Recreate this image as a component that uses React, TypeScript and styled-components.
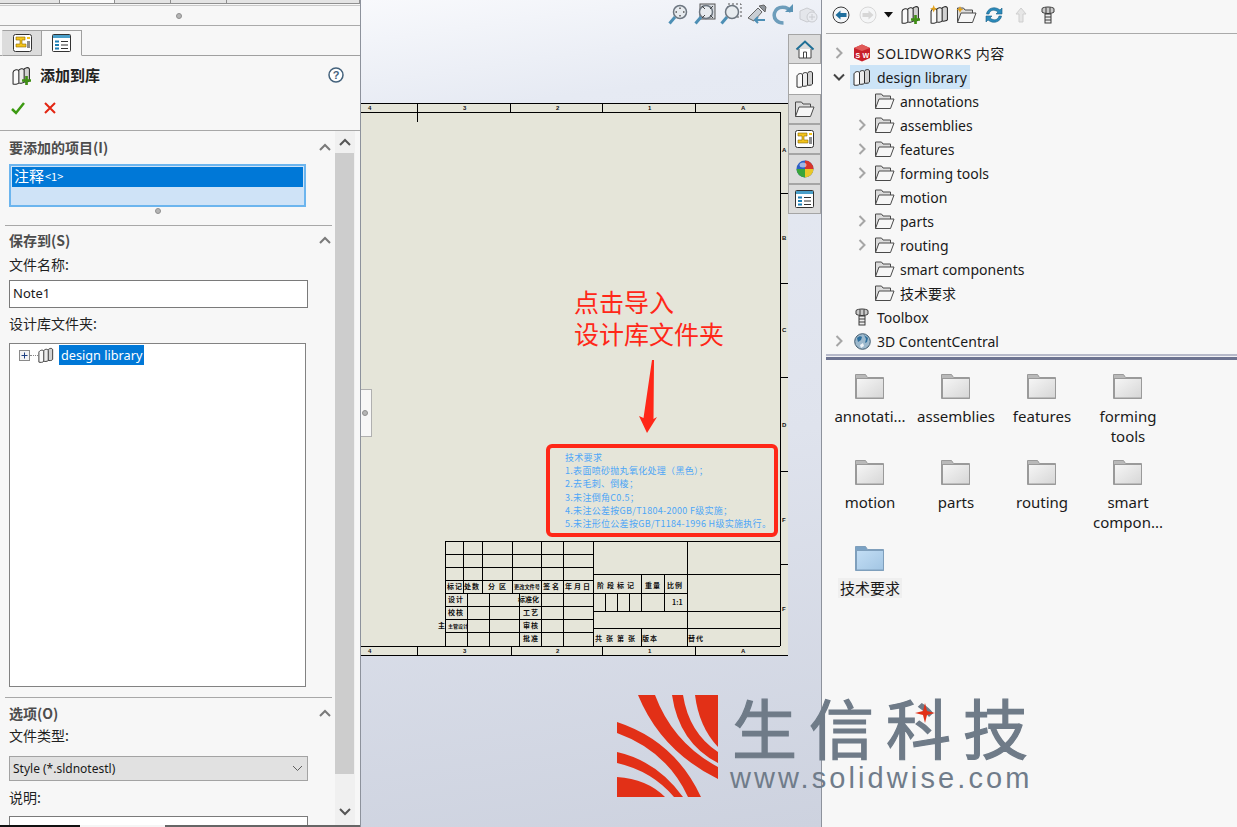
import styled, { createGlobalStyle } from 'styled-components';

const CJK = '"Noto Sans CJK SC", sans-serif';
const UI = '"Noto Sans", "Noto Sans CJK SC", sans-serif';

const GlobalStyle = createGlobalStyle`
  html, body {
    margin: 0;
    padding: 0;
    background: #f7f7f7;
  }
  * {
    box-sizing: border-box;
  }
`;

const Screen = styled.div`
  position: relative;
  display: flex;
  width: 1237px;
  height: 827px;
  overflow: hidden;
  font-family: ${UI};
  color: #1a1a1a;
`;

/* ---------- left property manager ---------- */

const LeftPanel = styled.aside`
  display: flex;
  flex-direction: column;
  width: 361px;
  height: 827px;
  flex: none;
  background: #f7f7f7;
  border-right: 1px solid #8d929c;
`;

const TopStubs = styled.div`
  display: flex;
  height: 6px;
  flex: none;
  border-bottom: 1px solid #c8c8c8;
`;

const Stub = styled.div<{ $w: number; $active?: boolean }>`
  width: ${(p) => p.$w}px;
  height: 4px;
  background: ${(p) => (p.$active ? '#fafafa' : '#e4e4e4')};
  border-right: 1px solid #8f8f8f;
  border-bottom: 1px solid #8f8f8f;
`;

const GripRow = styled.div<{ $h: number; $x: number; $line?: boolean }>`
  display: flex;
  align-items: center;
  height: ${(p) => p.$h}px;
  flex: none;
  padding-left: ${(p) => p.$x}px;
  ${(p) => p.$line && 'border-bottom: 1px solid #aaaaaa;'}
`;

const GripDot = styled.span`
  width: 6px;
  height: 6px;
  border-radius: 50%;
  background: #b5b5b5;
  border: 1px solid #8f8f8f;
`;

const TabBar = styled.div`
  display: flex;
  align-items: flex-end;
  height: 30px;
  flex: none;
  padding-left: 2px;
  border-bottom: 1px solid #a0a0a0;
`;

const PanelTab = styled.div<{ $active?: boolean }>`
  display: flex;
  align-items: center;
  justify-content: center;
  width: 40px;
  height: 26px;
  margin-bottom: -1px;
  background: ${(p) => (p.$active ? '#f7f7f7' : '#dcdcdc')};
  border: 1px solid #a0a0a0;
  border-left: ${(p) => (p.$active ? '0' : '1px solid #dcdcdc')};
  border-bottom: ${(p) => (p.$active ? '1px solid #f7f7f7' : '1px solid #a0a0a0')};
`;

const PropHeader = styled.div`
  display: flex;
  flex-direction: column;
  height: 75px;
  flex: none;
  padding: 0 16px 0 12px;
  border-bottom: 1px solid #a8a8a8;
`;

const TitleRow = styled.div`
  display: flex;
  align-items: center;
  height: 38px;
  gap: 9px;
`;

const Title = styled.div`
  flex: 1;
  padding-bottom: 2px;
  font-family: ${CJK};
  font-size: 15px;
  font-weight: 700;
  color: #222;
`;

const ActionRow = styled.div`
  display: flex;
  align-items: center;
  gap: 19px;
  height: 28px;
  margin-left: -1px;
`;

const PanelBody = styled.div`
  display: flex;
  height: 694px;
  flex: none;
`;

const PanelContent = styled.div`
  width: 335px;
  flex: none;
  padding-left: 5px;
  overflow: hidden;
`;

const Section = styled.section<{ $h: number; $line?: boolean }>`
  height: ${(p) => p.$h}px;
  width: 327px;
  padding-left: 4px;
  overflow: hidden;
  ${(p) => p.$line && 'border-bottom: 1px solid #a8a8a8;'}
`;

const SectionHead = styled.div<{ $h: number }>`
  display: flex;
  align-items: center;
  justify-content: space-between;
  height: ${(p) => p.$h}px;
  padding: 0 1px 1px 0;
  font-family: ${CJK};
  font-size: 14px;
  font-weight: 700;
  color: #4d4d4d;
`;

const FieldLabel = styled.div<{ $h: number; $lift: number }>`
  display: flex;
  align-items: center;
  height: ${(p) => p.$h}px;
  padding-bottom: ${(p) => p.$lift}px;
  line-height: 20px;
  font-family: ${CJK};
  font-size: 14px;
  color: #1f1f1f;
`;

const SelectionList = styled.div`
  width: 297px;
  height: 43px;
  padding: 1px;
  background: #cfe3f7;
  border: 2px solid #6cb5ee;
`;

const SelectedItem = styled.div`
  display: flex;
  align-items: center;
  height: 20px;
  padding: 0 0 3px 2px;
  background: #0078d7;
  color: #fff;
  font-family: ${CJK};
  font-size: 15px;
`;

const ItemCount = styled.span`
  font-size: 11px;
  margin-left: 1px;
`;

const TextInput = styled.div<{ $h?: number }>`
  display: flex;
  align-items: center;
  width: 299px;
  height: ${(p) => p.$h ?? 28}px;
  padding: 0 0 3px 3px;
  background: #fff;
  border: 1px solid #7a7a7a;
  font-size: 13px;
`;

const FolderTree = styled.div`
  width: 297px;
  height: 344px;
  padding: 1px 0 0 9px;
  background: #fff;
  border: 1px solid #828282;
`;

const FolderTreeRow = styled.div`
  display: flex;
  align-items: center;
  height: 20px;
`;

const Dots = styled.span`
  width: 8px;
  border-top: 1px dotted #888;
`;

const PickedNode = styled.span`
  display: flex;
  align-items: center;
  height: 20px;
  margin-left: 5px;
  padding: 0 2px;
  background: #0078d7;
  color: #fff;
  font-size: 12.7px;
`;

const ComboBox = styled.div`
  display: flex;
  align-items: center;
  justify-content: space-between;
  width: 299px;
  height: 25px;
  padding: 0 4px 0 3px;
  background: #e1e1e1;
  border: 1px solid #a3a3a3;
  font-size: 12px;
`;

const ScrollBar = styled.div`
  display: flex;
  flex-direction: column;
  width: 20px;
  flex: none;
  background: #f0f0f0;
`;

const ScrollArrow = styled.div<{ $h: number; $end?: boolean }>`
  display: flex;
  align-items: ${(p) => (p.$end ? 'flex-end' : 'center')};
  justify-content: center;
  height: ${(p) => p.$h}px;
  padding-bottom: ${(p) => (p.$end ? '9px' : '0')};
  flex: none;
`;

const ScrollThumb = styled.div`
  width: 19px;
  height: 621px;
  flex: none;
  background: #cdcdcd;
`;

const StatusStrip = styled.div`
  display: flex;
  height: 3px;
  flex: none;
  background: #666;
  margin-top: auto;
`;

const StatusPart = styled.div<{ $w: number; $c: string }>`
  width: ${(p) => p.$w}px;
  background: ${(p) => p.$c};
`;

/* ---------- centre canvas ---------- */

const Canvas = styled.main`
  position: relative;
  display: flex;
  width: 460px;
  flex: none;
  height: 827px;
  background: linear-gradient(172deg, #f8f9fc 0%, #e6eaf3 14%, #dfe3ed 55%, #cdd2df 100%);
`;

const Workspace = styled.div`
  width: 427px;
  flex: none;
  padding-top: 103px;
`;

const Sheet = styled.div`
  position: relative;
  width: 427px;
  height: 553px;
  background: #e5e5d9;
`;

const SheetArt = styled.svg`
  display: block;
`;

const NoteBox = styled.div`
  position: absolute;
  left: 185px;
  top: 341px;
  width: 232px;
  height: 93px;
  padding: 3px 0 0 15px;
  border: 4px solid #ff2718;
  border-radius: 6px;
  font-family: ${CJK};
  font-size: 9px;
  letter-spacing: 0.3px;
  color: #4da5f7;
`;

const NoteLine = styled.div`
  height: 13.2px;
  line-height: 13px;
  white-space: nowrap;
`;

const Callout = styled.div`
  position: absolute;
  left: 213px;
  top: 182px;
  font-family: ${CJK};
  font-size: 25px;
  line-height: 32px;
  color: #ff2718;
`;

const HeadsUp = styled.div`
  position: absolute;
  top: 3px;
  left: 307px;
  display: flex;
  align-items: center;
  gap: 4px;
`;

const HeadsUpIcon = styled.span`
  display: flex;
  width: 22px;
  height: 24px;
  align-items: center;
  justify-content: center;
`;

const CollapseHandle = styled.div`
  position: absolute;
  left: 0;
  top: 389px;
  display: flex;
  align-items: center;
  width: 11px;
  height: 48px;
  padding-left: 1px;
  background: #f7f7f7;
  border: 1px solid #b0b0b0;
  border-left: 0;
`;

const PaneTabs = styled.nav`
  display: flex;
  flex-direction: column;
  width: 33px;
  flex: none;
  padding-top: 34px;
`;

const PaneTab = styled.div<{ $active?: boolean }>`
  display: flex;
  align-items: center;
  justify-content: center;
  height: 30px;
  background: ${(p) => (p.$active ? '#fbfbfb' : '#dcdcdc')};
  border: 1px solid #a5a5a5;
  border-top-width: ${(p) => (p.$active ? '0' : '1px')};
  border-right: ${(p) => (p.$active ? '0' : '1px solid #a5a5a5')};
  border-bottom-width: ${(p) => (p.$active ? '0' : '1px')};
`;

/* ---------- right task pane ---------- */

const RightPanel = styled.aside`
  display: flex;
  flex-direction: column;
  flex: 1;
  height: 827px;
  background: #f7f7f7;
  border-left: 1px solid #8d929c;
`;

const PaneToolbar = styled.div`
  display: flex;
  align-items: center;
  height: 34px;
  margin-left: 4px;
  padding: 0 0 4px 2px;
  border-bottom: 1px solid #aaa;
`;

const ToolSlot = styled.span<{ $w: number }>`
  display: flex;
  justify-content: center;
  width: ${(p) => p.$w}px;
  flex: none;
`;

const Tree = styled.div`
  height: 320px;
  flex: none;
  padding-top: 7px;
`;

const TreeRow = styled.div<{ $level: number }>`
  display: flex;
  align-items: center;
  height: 24px;
  padding-left: ${(p) => 11 + p.$level * 23}px;
  font-size: 14px;
`;

const ChevronSlot = styled.span<{ $level: number }>`
  display: flex;
  align-items: center;
  justify-content: center;
  width: 12px;
  margin-right: ${(p) => (p.$level ? 3 : 5)}px;
`;

const TreeNode = styled.span<{ $selected?: boolean }>`
  display: flex;
  align-items: center;
  gap: 6px;
  height: 24px;
  padding: 0 3px;
  background: ${(p) => (p.$selected ? '#cce4f7' : 'transparent')};
`;

const TreeIcon = styled.span<{ $w: number }>`
  display: flex;
  justify-content: center;
  width: ${(p) => p.$w}px;
  margin-right: ${(p) => (p.$w === 21 ? -1 : 0)}px;
  flex: none;
`;

const TreeLabel = styled.span<{ $spread?: boolean }>`
  letter-spacing: ${(p) => (p.$spread ? '0.5px' : '0')};
`;

const Splitter = styled.div`
  height: 6px;
  flex: none;
  margin-left: 4px;
  background: #f2f2f5;
  border-top: 2px solid #b6b9c9;
  border-bottom: 3px solid #6d7390;
`;

const IconGrid = styled.div`
  display: grid;
  grid-template-columns: repeat(4, 86px);
  grid-auto-rows: 86px;
  padding: 14px 0 0 5px;
`;

const IconCell = styled.div`
  display: flex;
  flex-direction: column;
  align-items: center;
  font-size: 15px;
  line-height: 20px;
  text-align: center;
`;

const IconLabel = styled.div<{ $selected?: boolean }>`
  margin-top: 7px;
  padding: 0 2px;
  font-family: ${UI};
  background: ${(p) => (p.$selected ? '#efefef' : 'transparent')};
`;

/* ---------- watermark ---------- */

const Watermark = styled.div`
  position: absolute;
  left: 617px;
  top: 695px;
  display: flex;
  gap: 16px;
  pointer-events: none;
`;

const WatermarkText = styled.div`
  position: relative;
  color: #6f7b88;
`;

const BrandName = styled.div`
  height: 62px;
  line-height: 62px;
  margin-left: -3px;
  font-family: ${CJK};
  font-size: 65px;
  letter-spacing: 12px;
  -webkit-text-stroke: 1.2px #6f7b88;
  white-space: nowrap;
`;

const BrandUrl = styled.div`
  margin-left: -5px;
  margin-top: 5px;
  line-height: 32px;
  font-family: 'Liberation Sans', sans-serif;
  font-size: 29px;
  letter-spacing: 3.1px;
  white-space: nowrap;
  color: #707c8a;
`;

const BrandStar = styled.svg`
  position: absolute;
  left: 180px;
  top: 8px;
`;

/* ---------- icons ---------- */

const Books = ({ size = 18, plus = false, star = false }: { size?: number; plus?: boolean; star?: boolean }) => (
  <svg width={size} height={size} viewBox="0 0 18 18">
    <g stroke="#2c2c2c" strokeWidth="1">
      <path d="M11 4C11.500 1.500 16 .5 16.500 3V14C16 15.500 12 15.500 11 15z" fill="#d2d2d2" />
      <path d="M6 5C6.500 2.500 11 1.500 11.500 4V15C11 16.500 7 16.500 6 16z" fill="#ececec" />
      <path d="M1 6C1.500 3.500 6 2.500 6.500 5V16C6 17.500 2 17.500 1 17z" fill="#fafafa" />
    </g>
    {plus && <path d="M12.500 9.500h2.500v3h3v2.500h-3v3h-2.500v-3h-3v-2.500h3z" fill="#3f8f14" />}
    {star && <path d="M3.500 0 4.500 2.500 7 3.500 4.500 4.500 3.500 7 2.500 4.500 0 3.500 2.500 2.500z" fill="#e2a21c" />}
  </svg>
);

const OpenFolder = ({ star = false }: { star?: boolean }) => (
  <svg width="21" height="18" viewBox="0 0 21 18">
    <path d="M1.500 16.500V2h6l1.500 2h7.500v3" fill="#dcdcdc" stroke="#4a4a4a" />
    <path d="M1.500 16.500 5 7h15l-3.500 9.500z" fill="#f6f6f6" stroke="#4a4a4a" />
    {star && <path d="M4 0 5 2.500 7.500 3.500 5 4.500 4 7 3 4.500.5 3.500 3 2.500z" fill="#e2a21c" />}
  </svg>
);

const Chevron = ({ open = false, tone = '#a6a6a6' }: { open?: boolean; tone?: string }) => (
  <svg width="12" height="12" viewBox="0 0 12 12">
    <path d={open ? 'M1 3.500 6 8.500 11 3.500' : 'M3.500 1 8.500 6 3.500 11'} fill="none" stroke={tone} strokeWidth="2" />
  </svg>
);

const CollapseUp = ({ tone = '#7a7a7a' }: { tone?: string }) => (
  <svg width="12" height="8" viewBox="0 0 12 8">
    <path d="M1 7 6 2l5 5" fill="none" stroke={tone} strokeWidth="2" />
  </svg>
);

const LayoutIcon = () => (
  <svg width="19" height="18" viewBox="0 0 19 18">
    <rect x=".5" y=".5" width="18" height="17" rx="2" fill="#fff" stroke="#333" />
    <path d="M3 3h9v3H9v4h4v3H3v-3h4V6H3z" fill="#f3c31c" stroke="#8a6a08" strokeWidth=".6" />
    <rect x="14" y="3" width="3" height="2" fill="#f3c31c" />
    <rect x="14" y="7" width="3" height="7" fill="#8d8d8d" />
  </svg>
);

const ListIcon = () => (
  <svg width="19" height="18" viewBox="0 0 19 18">
    <rect x=".5" y=".5" width="18" height="17" rx="1" fill="#fff" stroke="#333" />
    <rect x="1" y="1" width="17" height="3" fill="#4a9fc9" />
    <path d="M3 6.500h4v2H3zM3 10h4v2H3zM3 13.500h4v2H3z" fill="#1c7fb5" />
    <path d="M9 7.500h7M9 11h7M9 14.500h7" stroke="#333" />
  </svg>
);

const HomeIcon = () => (
  <svg width="20" height="19" viewBox="0 0 20 19">
    <path d="M1.500 9.500 10 1.500l8.500 8" fill="none" stroke="#1f6f96" strokeWidth="2" />
    <path d="M4 9v9h12V9" fill="#fff" stroke="#444" />
    <path d="M8.500 18v-6h3v6" fill="none" stroke="#444" />
  </svg>
);

const ColorBall = () => (
  <svg width="18" height="18" viewBox="0 0 18 18">
    <circle cx="9" cy="9" r="8.500" fill="#2d5fc4" />
    <path d="M9 9V.5A8.500 8.500 0 0 1 17.500 9z" fill="#d8352a" />
    <path d="M9 9h8.500A8.500 8.500 0 0 1 9 17.500z" fill="#e9c728" />
    <path d="M9 9v8.500A8.500 8.500 0 0 1 .5 9z" fill="#3aa53a" />
    <ellipse cx="7" cy="5" rx="3.500" ry="2.500" fill="#fff" opacity=".55" />
  </svg>
);

const SwCube = () => (
  <svg width="18" height="18" viewBox="0 0 18 18">
    <path d="M9 .5 17 4v10l-8 3.500L1 14V4z" fill="#c8202a" />
    <path d="M9 .5 17 4 9 7 1 4z" fill="#e05a58" />
    <text x="2.500" y="14" fontFamily="Liberation Sans" fontWeight="700" fontSize="7" fill="#fff">S</text>
    <text x="9.500" y="14" fontFamily="Liberation Sans" fontWeight="700" fontSize="7" fill="#fff">W</text>
  </svg>
);

const Bolt = () => (
  <svg width="14" height="18" viewBox="0 0 14 18">
    <path d="M1 2.500C3 .5 11 .5 13 2.500V6c-2 2-10 2-12 0z" fill="#c9c9c9" stroke="#3a3a3a" />
    <path d="M5 1.500v6M9 1.500v6" stroke="#3a3a3a" />
    <rect x="4" y="8" width="6" height="9" fill="#ededed" stroke="#3a3a3a" />
    <path d="M4 11h6M4 14h6" stroke="#3a3a3a" />
  </svg>
);

const Globe = () => (
  <svg width="17" height="17" viewBox="0 0 17 17">
    <circle cx="8.500" cy="8.500" r="7.800" fill="#9db9cd" stroke="#3f5a6e" />
    <path d="M3 5c2-2 4-2 5-1l-1 3-3 2zM10 2l4 3-1 4-2 1 1-4z" fill="#2c6f9e" />
    <path d="M6 12l3-2 1 3-3 2z" fill="#eef4f8" />
  </svg>
);

const Magnifier = ({ variant }: { variant: 'fit' | 'box' | 'dash' }) => (
  <svg width="22" height="24" viewBox="0 0 22 24">
    {variant === 'box' && <rect x="6" y="1" width="15" height="15" fill="#d8dce2" stroke="#555" />}
    {variant === 'dash' && <rect x="8" y="1" width="13" height="13" fill="none" stroke="#555" strokeDasharray="2 2" />}
    <circle cx="12" cy="9" r="6.500" fill="#e7ebef" stroke="#6d7680" strokeWidth="1.500" />
    <path d="M7 14 1.500 20.500" stroke="#4d8fb5" strokeWidth="3" />
    {variant === 'fit' && <path d="M12 4.500V6M12 12v1.500M7.500 9H9M15 9h1.500" stroke="#555" strokeWidth="1.500" />}
    {variant === 'box' && <path d="M8 3l3 3M19 3l-3 3M8 15l3-3M19 15l-3-3" stroke="#444" />}
  </svg>
);

const Flashlight = () => (
  <svg width="22" height="24" viewBox="0 0 22 24">
    <path d="M2 15 12 5l4 4-8 9z" fill="#c9ced4" stroke="#666" />
    <path d="M13 3l6 6 1-5-2-2z" fill="#8f959c" stroke="#666" />
    <path d="M9 17h10M12 14l-3 3 3 3" fill="none" stroke="#4d8fb5" strokeWidth="2" />
  </svg>
);

const RedoArrow = () => (
  <svg width="22" height="24" viewBox="0 0 22 24">
    <path d="M19 9C16 3 5 2 2.500 10c-1.500 6 3 10 9 10" fill="none" stroke="#6d9dbb" strokeWidth="3.500" />
    <path d="M13 9h8V1z" fill="#5a93b5" />
  </svg>
);

const FadedScene = () => (
  <svg width="22" height="24" viewBox="0 0 22 24" opacity=".35">
    <path d="M2 8l7-3 7 3v8l-7 3-7-3z" fill="#d6d6d6" stroke="#8a8a8a" />
    <circle cx="14" cy="14" r="5" fill="#e6e6e6" stroke="#8a8a8a" />
    <path d="M11 14h6M14 11v6" stroke="#8a8a8a" />
  </svg>
);

const FolderIcon = ({ blue = false }: { blue?: boolean }) => {
  const tab = blue ? '#7ba2c4' : '#b9b9b9';
  const line = blue ? '#7f9fbc' : '#9a9a9a';
  return (
    <svg width="30" height="25" viewBox="0 0 30 25">
      <defs>
        <linearGradient id={blue ? 'fb' : 'fg'} x1="0" y1="0" x2="1" y2="1">
          <stop offset="0" stopColor={blue ? '#c3def5' : '#f6f6f6'} />
          <stop offset="1" stopColor={blue ? '#a2c5e3' : '#d6d6d6'} />
        </linearGradient>
      </defs>
      <path d="M.5 24.500V.5h10l2 3h16v21z" fill={tab} stroke={line} />
      <rect x="1.500" y="4.500" width="27" height="19.500" fill={`url(#${blue ? 'fb' : 'fg'})`} stroke={line} />
    </svg>
  );
};

/* ---------- data ---------- */

const TREE: { label: string; level: number; arrow?: boolean; open?: boolean; kind: string }[] = [
  { label: 'SOLIDWORKS 内容', level: 0, arrow: true, kind: 'sw' },
  { label: 'design library', level: 0, arrow: true, open: true, kind: 'books' },
  { label: 'annotations', level: 1, kind: 'folder' },
  { label: 'assemblies', level: 1, arrow: true, kind: 'folder' },
  { label: 'features', level: 1, arrow: true, kind: 'folder' },
  { label: 'forming tools', level: 1, arrow: true, kind: 'folder' },
  { label: 'motion', level: 1, kind: 'folder' },
  { label: 'parts', level: 1, arrow: true, kind: 'folder' },
  { label: 'routing', level: 1, arrow: true, kind: 'folder' },
  { label: 'smart components', level: 1, kind: 'folder' },
  { label: '技术要求', level: 1, kind: 'folder' },
  { label: 'Toolbox', level: 0, kind: 'bolt' },
  { label: '3D ContentCentral', level: 0, arrow: true, kind: 'globe' },
];

const FOLDERS = ['annotati...', 'assemblies', 'features', 'forming tools', 'motion', 'parts', 'routing', 'smart compon...', '技术要求'];

const NOTES = [
  '技术要求',
  '1.表面喷砂抛丸氧化处理（黑色）；',
  '2.去毛刺、倒棱；',
  '3.未注倒角C0.5；',
  '4.未注公差按GB/T1804-2000 F级实施；',
  '5.未注形位公差按GB/T1184-1996 H级实施执行。',
];

// x1 y1 x2 y2 in page pixels, the svg viewBox uses the same numbers
const LINES = [
  [361, 103.5, 789, 103.5], [361, 112.5, 780, 112.5], [361, 646.5, 780, 646.5], [361, 655.5, 789, 655.5],
  [780.5, 112, 780.5, 646], [788.5, 103, 788.5, 655],
  [417.5, 103, 417.5, 122], [510.5, 103, 510.5, 112], [602.5, 103, 602.5, 112], [695.5, 103, 695.5, 112],
  [417.5, 646, 417.5, 655], [511.5, 646, 511.5, 655], [602.5, 646, 602.5, 655], [695.5, 646, 695.5, 655],
  [780, 193.5, 789, 193.5], [780, 283.5, 789, 283.5], [780, 377.5, 789, 377.5], [780, 471.5, 789, 471.5], [780, 564.5, 789, 564.5],
  // title block, left part
  [445, 541.5, 780, 541.5], [445, 554.5, 593, 554.5], [445, 567.5, 593, 567.5], [445, 580.5, 593, 580.5],
  [445, 593.5, 687, 593.5], [445, 606.5, 593, 606.5], [445, 619.5, 593, 619.5], [445, 632.5, 593, 632.5],
  [445.5, 541, 445.5, 646], [463.5, 541, 463.5, 593], [482.5, 541, 482.5, 593], [512.5, 541, 512.5, 593],
  [541.5, 541, 541.5, 646], [563.5, 541, 563.5, 646], [593.5, 541, 593.5, 646],
  [467.5, 593, 467.5, 646], [489.5, 593, 489.5, 646], [519.5, 593, 519.5, 646],
  // title block, right part
  [593, 574.5, 780, 574.5], [593, 611.5, 780, 611.5], [593, 628.5, 780, 628.5], [687.5, 541, 687.5, 646],
  [641.5, 574, 641.5, 611], [664.5, 574, 664.5, 611], [605.5, 593, 605.5, 611], [617.5, 593, 617.5, 611],
  [629.5, 593, 629.5, 611], [641.5, 628, 641.5, 646],
];

// x, baseline, text, letter spacing, font size
const LABELS: [number, number, string, number, number][] = [
  [447, 589, '标记', 1, 7], [464, 589, '处数', 1, 7], [488, 589, '分区', 4, 7], [514, 589, '更改文件号', 0, 5.2], [543, 589, '签名', 2, 7],
  [565, 589, '年月日', 2, 7],
  [448, 602, '设计', 1, 7], [518, 602, '标准化', 0, 7], [448, 615, '校核', 1, 7], [523, 615, '工艺', 1, 7],
  [448, 628, '主管设计', 0, 5], [523, 628, '审核', 1, 7], [523, 641, '批准', 1, 7], [438, 628, '主', 0, 7],
  [597, 588, '阶段标记', 3, 7], [645, 588, '重量', 1, 7], [667, 588, '比例', 1, 7], [672, 605, '1:1', 0, 7],
  [595, 641, '共张第张', 4, 7], [642, 641, '版本', 1, 7], [688, 641, '替代', 1, 7],
];

const BORDER_MARKS: [number, number, string][] = [
  [368, 110, '4'], [463, 110, '3'], [556, 110, '2'], [648, 110, '1'], [741, 110, 'A'],
  [782, 152, 'A'], [782, 240, 'B'], [782, 332, 'C'], [782, 427, 'D'], [782, 522, 'F'], [782, 611, 'F'],
  [463, 653, '3'], [556, 653, '2'], [648, 653, '1'], [741, 653, 'A'], [368, 653, '4'],
];

export default function App() {
  return (
    <Screen>
      <GlobalStyle />

      <LeftPanel>
        <TopStubs>
          <Stub $w={60} />
          <Stub $w={55} $active />
          <Stub $w={56} />
          <Stub $w={56} />
          <Stub $w={133} />
        </TopStubs>
        <GripRow $h={20} $x={176} $line>
          <GripDot />
        </GripRow>
        <TabBar>
          <PanelTab>
            <LayoutIcon />
          </PanelTab>
          <PanelTab $active>
            <ListIcon />
          </PanelTab>
        </TabBar>
        <PropHeader>
          <TitleRow>
            <Books plus size={19} />
            <Title>添加到库</Title>
            <svg width="16" height="16" viewBox="0 0 16 16">
              <circle cx="8" cy="8" r="7" fill="#fff" stroke="#44627c" strokeWidth="1.500" />
              <text x="8" y="12" textAnchor="middle" fontSize="11" fontWeight="700" fontFamily="Liberation Sans" fill="#44627c">?</text>
            </svg>
          </TitleRow>
          <ActionRow>
            <svg width="14" height="14" viewBox="0 0 14 14">
              <path d="M1 8l4 4 8-10" fill="none" stroke="#3c9a12" strokeWidth="2.500" />
            </svg>
            <svg width="12" height="12" viewBox="0 0 12 12">
              <path d="M1 1l10 10M11 1 1 11" stroke="#e32512" strokeWidth="2" />
            </svg>
          </ActionRow>
        </PropHeader>
        <PanelBody>
          <PanelContent>
            <Section $h={95} $line>
              <SectionHead $h={33}>
                要添加的项目(I)
                <CollapseUp />
              </SectionHead>
              <SelectionList>
                <SelectedItem>
                  注释<ItemCount>&lt;1&gt;</ItemCount>
                </SelectedItem>
              </SelectionList>
              <GripRow $h={8} $x={146}>
                <GripDot />
              </GripRow>
            </Section>
            <Section $h={472} $line>
              <SectionHead $h={29}>
                保存到(S)
                <CollapseUp />
              </SectionHead>
              <FieldLabel $h={25} $lift={8}>文件名称:</FieldLabel>
              <TextInput>Note1</TextInput>
              <FieldLabel $h={35} $lift={6}>设计库文件夹:</FieldLabel>
              <FolderTree>
                <FolderTreeRow>
                  <svg width="11" height="11" viewBox="0 0 11 11">
                    <rect x=".5" y=".5" width="10" height="10" fill="#f3f3f3" stroke="#8a8a8a" />
                    <path d="M2.500 5.500h6M5.500 2.500v6" stroke="#1d3f82" />
                  </svg>
                  <Dots />
                  <Books size={16} />
                  <PickedNode>design library</PickedNode>
                </FolderTreeRow>
              </FolderTree>
            </Section>
            <Section $h={128}>
              <SectionHead $h={30}>
                选项(O)
                <CollapseUp />
              </SectionHead>
              <FieldLabel $h={28} $lift={14}>文件类型:</FieldLabel>
              <ComboBox>
                Style (*.sldnotestl)
                <svg width="11" height="7" viewBox="0 0 11 7">
                  <path d="M1 1l4.500 4.500L10 1" fill="none" stroke="#5f5f5f" />
                </svg>
              </ComboBox>
              <FieldLabel $h={35} $lift={4}>说明:</FieldLabel>
              <TextInput $h={20} />
            </Section>
          </PanelContent>
          <ScrollBar>
            <ScrollArrow $h={22}>
              <CollapseUp tone="#555" />
            </ScrollArrow>
            <ScrollThumb />
            <ScrollArrow $h={51} $end>
              <svg width="12" height="8" viewBox="0 0 12 8">
                <path d="M1 1l5 5 5-5" fill="none" stroke="#555" strokeWidth="2" />
              </svg>
            </ScrollArrow>
          </ScrollBar>
        </PanelBody>
        <StatusStrip>
          <StatusPart $w={80} $c="#111" />
          <StatusPart $w={85} $c="#f5f5f5" />
        </StatusStrip>
      </LeftPanel>

      <Canvas>
        <Workspace>
          <Sheet>
            <SheetArt width="427" height="553" viewBox="361 103 427 553">
              {LINES.map(([x1, y1, x2, y2], i) => (
                <line key={i} x1={x1} y1={y1} x2={x2} y2={y2} stroke="#000" strokeWidth="1" shapeRendering="crispEdges" />
              ))}
              {LABELS.map(([x, y, text, spacing, size]) => (
                <text key={`${x}-${y}`} x={x} y={y} fontFamily={CJK} fontWeight="700" fontSize={size} letterSpacing={spacing} fill="#111">
                  {text}
                </text>
              ))}
              {BORDER_MARKS.map(([x, y, text]) => (
                <text key={`${x}-${y}`} x={x} y={y} fontFamily="Liberation Sans" fontWeight="700" fontSize="6" fill="#111">
                  {text}
                </text>
              ))}
              <path d="M652 360H654L653.500 419 657 417 647 433 639 416 643.500 418z" fill="#ff2718" />
            </SheetArt>
            <Callout>
              点击导入
              <br />
              设计库文件夹
            </Callout>
            <NoteBox>
              {NOTES.map((line) => (
                <NoteLine key={line}>{line}</NoteLine>
              ))}
            </NoteBox>
          </Sheet>
        </Workspace>
        <PaneTabs>
          <PaneTab>
            <HomeIcon />
          </PaneTab>
          <PaneTab $active>
            <Books size={18} />
          </PaneTab>
          <PaneTab>
            <OpenFolder />
          </PaneTab>
          <PaneTab>
            <LayoutIcon />
          </PaneTab>
          <PaneTab>
            <ColorBall />
          </PaneTab>
          <PaneTab>
            <ListIcon />
          </PaneTab>
        </PaneTabs>
        <HeadsUp>
          <HeadsUpIcon>
            <Magnifier variant="fit" />
          </HeadsUpIcon>
          <HeadsUpIcon>
            <Magnifier variant="box" />
          </HeadsUpIcon>
          <HeadsUpIcon>
            <Magnifier variant="dash" />
          </HeadsUpIcon>
          <HeadsUpIcon>
            <Flashlight />
          </HeadsUpIcon>
          <HeadsUpIcon>
            <RedoArrow />
          </HeadsUpIcon>
          <HeadsUpIcon>
            <FadedScene />
          </HeadsUpIcon>
        </HeadsUp>
        <CollapseHandle>
          <GripDot />
        </CollapseHandle>
      </Canvas>

      <RightPanel>
        <PaneToolbar>
          <ToolSlot $w={26}>
            <svg width="18" height="18" viewBox="0 0 18 18">
              <circle cx="9" cy="9" r="8" fill="#f4f6f8" stroke="#3a3a3a" />
              <path d="M3.500 9 8.500 4.500V7h6v4h-6v2.500z" fill="#1f6f9e" />
            </svg>
          </ToolSlot>
          <ToolSlot $w={28}>
            <svg width="18" height="18" viewBox="0 0 18 18" opacity=".4">
              <circle cx="9" cy="9" r="8" fill="#f4f6f8" stroke="#a8a8a8" />
              <path d="M14.500 9 9.500 4.500V7h-6v4h6v2.500z" fill="#a8a8a8" />
            </svg>
          </ToolSlot>
          <ToolSlot $w={12}>
            <svg width="9" height="6" viewBox="0 0 9 6">
              <path d="M0 0h9L4.500 5.500z" fill="#111" />
            </svg>
          </ToolSlot>
          <ToolSlot $w={32}>
            <Books size={19} plus />
          </ToolSlot>
          <ToolSlot $w={27}>
            <Books size={19} star />
          </ToolSlot>
          <ToolSlot $w={27}>
            <OpenFolder star />
          </ToolSlot>
          <ToolSlot $w={27}>
            <svg width="18" height="18" viewBox="0 0 18 18">
              <path d="M1.500 8C2 3 9-1 15 4l2-2v6h-6l2-2C9 3 5 4 4 8z" fill="#2c8bbb" stroke="#1a5f86" strokeWidth=".6" />
              <path d="M16.500 10C16 15 9 19 3 14l-2 2v-6h6l-2 2c4 3 8 2 9-2z" fill="#2c8bbb" stroke="#1a5f86" strokeWidth=".6" />
            </svg>
          </ToolSlot>
          <ToolSlot $w={27}>
            <svg width="12" height="16" viewBox="0 0 12 16">
              <path d="M6 1 11 7H8v8H4V7H1z" fill="#e6e6e6" stroke="#cfcfcf" />
            </svg>
          </ToolSlot>
          <ToolSlot $w={27}>
            <Bolt />
          </ToolSlot>
        </PaneToolbar>
        <Tree>
          {TREE.map((row) => (
            <TreeRow key={row.label} $level={row.level}>
              <ChevronSlot $level={row.level}>
                {row.arrow && <Chevron open={row.open} tone={row.open ? '#444' : '#a6a6a6'} />}
              </ChevronSlot>
              <TreeNode $selected={row.open}>
                <TreeIcon $w={row.kind === 'folder' ? 21 : 18}>
                  {row.kind === 'sw' && <SwCube />}
                  {row.kind === 'books' && <Books size={18} />}
                  {row.kind === 'folder' && <OpenFolder />}
                  {row.kind === 'bolt' && <Bolt />}
                  {row.kind === 'globe' && <Globe />}
                </TreeIcon>
                <TreeLabel $spread={row.kind === 'sw'}>{row.label}</TreeLabel>
              </TreeNode>
            </TreeRow>
          ))}
        </Tree>
        <Splitter />
        <IconGrid>
          {FOLDERS.map((name, i) => {
            const blue = i === FOLDERS.length - 1;
            return (
              <IconCell key={name}>
                <FolderIcon blue={blue} />
                <IconLabel $selected={blue}>{name}</IconLabel>
              </IconCell>
            );
          })}
        </IconGrid>
      </RightPanel>

      <Watermark>
        <svg width="102" height="102" viewBox="0 0 102 102">
          <g fill="#e23017">
            <path d="M78 0h23v52Q82 32 78 0z" />
            <path d="M55 0h11q6 38 35 57v11Q62 48 55 0z" />
            <path d="M21 0h17q18 48 63 72v12Q44 56 21 0z" />
            <path d="M0 82v20h48Q30 84 0 82z" />
            <path d="M0 57v11q35 8 57 34h9Q40 66 0 57z" />
            <path d="M0 27v11q50 18 71 64h13Q58 46 0 27z" />
          </g>
        </svg>
        <WatermarkText>
          <BrandName>生信科技</BrandName>
          <BrandUrl>www.solidwise.com</BrandUrl>
          <BrandStar width="20" height="20" viewBox="0 0 20 20">
            <path d="M10 0 12 8 20 10 12 12 10 20 8 12 0 10 8 8z" fill="#e23017" />
          </BrandStar>
        </WatermarkText>
      </Watermark>
    </Screen>
  );
}
